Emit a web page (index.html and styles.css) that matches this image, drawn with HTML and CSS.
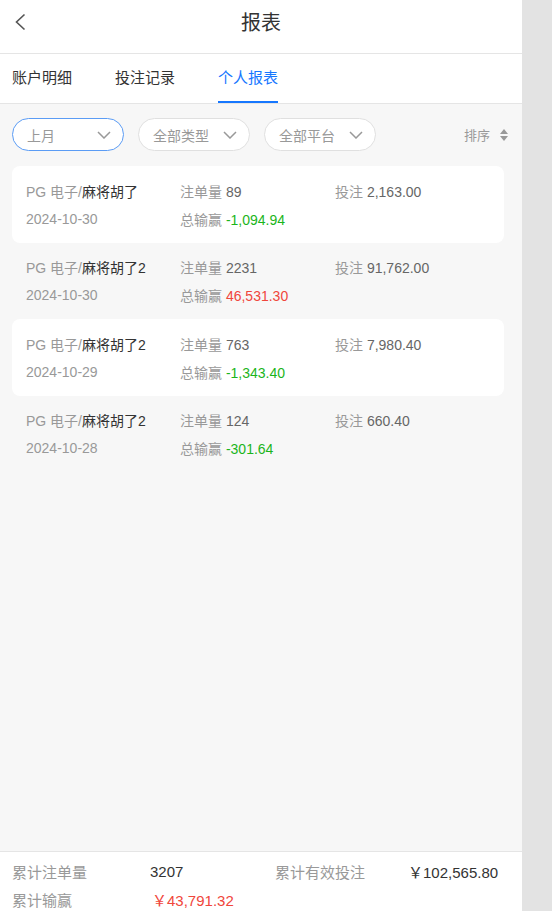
FILE: index.html
```
<!DOCTYPE html>
<html lang="zh-CN">
<head>
<meta charset="utf-8">
<title>报表</title>
<link rel="stylesheet" href="styles.css">
</head>
<body>
<div class="app">
  <header class="topbar">
    <span class="back">
      <svg width="12" height="18" viewBox="0 0 12 18"><path d="M10.5 1.5 L2.5 9 L10.5 16.5" fill="none" stroke="#555" stroke-width="1.6"/></svg>
    </span>
    <h1 class="title">报表</h1>
  </header>
  <nav class="tabs">
    <span class="tab">账户明细</span>
    <span class="tab">投注记录</span>
    <span class="tab active">个人报表</span>
  </nav>
  <main class="content">
    <div class="filters">
      <div class="pill selected"><span>上月</span><svg class="chev" width="14" height="8" viewBox="0 0 14 8"><path d="M1 1 L7 7 L13 1" fill="none" stroke="#999" stroke-width="1.5"/></svg></div>
      <div class="pill"><span>全部类型</span><svg class="chev" width="14" height="8" viewBox="0 0 14 8"><path d="M1 1 L7 7 L13 1" fill="none" stroke="#999" stroke-width="1.5"/></svg></div>
      <div class="pill"><span>全部平台</span><svg class="chev" width="14" height="8" viewBox="0 0 14 8"><path d="M1 1 L7 7 L13 1" fill="none" stroke="#999" stroke-width="1.5"/></svg></div>
      <div class="sort"><span>排序</span><svg width="8" height="12" viewBox="0 0 8 12"><path d="M4 0 L8 5 L0 5 Z M0 7 L8 7 L4 12 Z" fill="#999"/></svg></div>
    </div>
    <div class="list">
      <div class="row white">
        <div><span class="muted">PG 电子/</span><span class="dark">麻将胡了</span></div>
        <div><span class="muted">注单量</span> <span class="val">89</span></div>
        <div><span class="muted">投注</span> <span class="val">2,163.00</span></div>
        <div class="muted">2024-10-30</div>
        <div><span class="muted">总输赢</span> <span class="green">-1,094.94</span></div>
        <div></div>
      </div>
      <div class="row">
        <div><span class="muted">PG 电子/</span><span class="dark">麻将胡了2</span></div>
        <div><span class="muted">注单量</span> <span class="val">2231</span></div>
        <div><span class="muted">投注</span> <span class="val">91,762.00</span></div>
        <div class="muted">2024-10-30</div>
        <div><span class="muted">总输赢</span> <span class="red">46,531.30</span></div>
        <div></div>
      </div>
      <div class="row white">
        <div><span class="muted">PG 电子/</span><span class="dark">麻将胡了2</span></div>
        <div><span class="muted">注单量</span> <span class="val">763</span></div>
        <div><span class="muted">投注</span> <span class="val">7,980.40</span></div>
        <div class="muted">2024-10-29</div>
        <div><span class="muted">总输赢</span> <span class="green">-1,343.40</span></div>
        <div></div>
      </div>
      <div class="row">
        <div><span class="muted">PG 电子/</span><span class="dark">麻将胡了2</span></div>
        <div><span class="muted">注单量</span> <span class="val">124</span></div>
        <div><span class="muted">投注</span> <span class="val">660.40</span></div>
        <div class="muted">2024-10-28</div>
        <div><span class="muted">总输赢</span> <span class="green">-301.64</span></div>
        <div></div>
      </div>
    </div>
  </main>
  <footer class="summary">
    <span class="muted">累计注单量</span>
    <span class="dark">3207</span>
    <span class="muted">累计有效投注</span>
    <span class="dark">￥102,565.80</span>
    <span class="muted">累计输赢</span>
    <span class="red">￥43,791.32</span>
  </footer>
</div>
</body>
</html>
```
FILE: styles.css
```
* { box-sizing: border-box; }
html, body { margin: 0; padding: 0; }
body {
  background: #e3e3e3;
  font-family: "Liberation Sans", "Noto Sans CJK SC", Arial, sans-serif;
  font-size: 14px;
  color: #333;
}
.app {
  width: 522px;
  min-height: 911px;
  display: flex;
  flex-direction: column;
  background: #f7f7f7;
}
.topbar {
  height: 54px;
  background: #fff;
  border-bottom: 1px solid #e5e5e5;
  display: flex;
  align-items: center;
  justify-content: center;
  position: relative;
}
.back {
  position: absolute;
  left: 14px;
  top: 13px;
  display: flex;
}
.title {
  margin: 0;
  font-size: 20px;
  font-weight: normal;
  color: #333;
  line-height: 1;
  padding-bottom: 8px;
}
.tabs {
  height: 50px;
  background: #fff;
  border-bottom: 1px solid #e5e5e5;
  display: flex;
  gap: 43px;
  padding-left: 12px;
}
.tab {
  font-size: 15px;
  color: #333;
  display: flex;
  align-items: center;
  height: 49px;
  border-bottom: 2px solid transparent;
  margin-bottom: -1px;
  padding-bottom: 3px;
}
.tab.active {
  color: #1677ff;
  border-bottom-color: #1677ff;
}
.content { flex: 1; }
.filters {
  display: flex;
  align-items: center;
  gap: 14px;
  padding: 14px 14px 15px 12px;
}
.pill {
  width: 112px;
  height: 33px;
  border: 1px solid #e0e0e0;
  border-radius: 17px;
  background: #fff;
  display: flex;
  align-items: center;
  justify-content: space-between;
  padding: 0 12px 0 14px;
  color: #999;
  font-size: 14px;
}
.pill.selected { border-color: #5b9cf5; }
.sort {
  margin-left: auto;
  display: flex;
  align-items: center;
  gap: 10px;
  color: #999;
  font-size: 13px;
}
.list { padding: 0 18px 0 12px; }
.row {
  display: grid;
  grid-template-columns: 154px 155px 1fr;
  grid-auto-rows: 28px;
  align-items: center;
  padding: 10.5px 14px 10px;
  border-radius: 8px;
  font-size: 14px;
}
.row.white { background: #fff; }
.muted { color: #999; }
.dark { color: #333; }
.val { color: #666; }
.green { color: #1bb51b; }
.red { color: #f0463c; }
.summary {
  background: #fff;
  border-top: 1px solid #e5e5e5;
  display: grid;
  grid-template-columns: 138px 125px 133px 1fr;
  grid-auto-rows: 28px;
  align-items: center;
  padding: 5px 12px 0;
  height: 60px;
  font-size: 15px;
}
.summary .red { padding-left: 2px; }
```
